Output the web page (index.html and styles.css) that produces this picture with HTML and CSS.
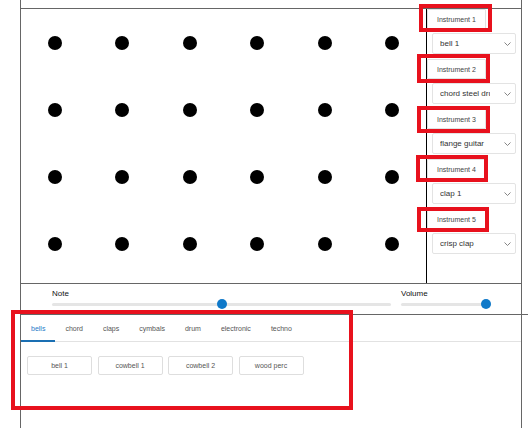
FILE: index.html
```html
<!DOCTYPE html>
<html>
<head>
<meta charset="utf-8">
<link rel="stylesheet" href="styles.css">
</head>
<body>
<div class="frame">
  <div class="top"></div>
  <div class="main">
    <div class="grid">
      <div class="cell"><span class="dot"></span></div><div class="cell"><span class="dot"></span></div><div class="cell"><span class="dot"></span></div><div class="cell"><span class="dot"></span></div><div class="cell"><span class="dot"></span></div><div class="cell"><span class="dot"></span></div>
      <div class="cell"><span class="dot"></span></div><div class="cell"><span class="dot"></span></div><div class="cell"><span class="dot"></span></div><div class="cell"><span class="dot"></span></div><div class="cell"><span class="dot"></span></div><div class="cell"><span class="dot"></span></div>
      <div class="cell"><span class="dot"></span></div><div class="cell"><span class="dot"></span></div><div class="cell"><span class="dot"></span></div><div class="cell"><span class="dot"></span></div><div class="cell"><span class="dot"></span></div><div class="cell"><span class="dot"></span></div>
      <div class="cell"><span class="dot"></span></div><div class="cell"><span class="dot"></span></div><div class="cell"><span class="dot"></span></div><div class="cell"><span class="dot"></span></div><div class="cell"><span class="dot"></span></div><div class="cell"><span class="dot"></span></div>
    </div>
    <div class="panel">
      <div class="inst">
        <button class="ibtn">Instrument 1</button>
        <div class="sel"><span class="sel-text">bell 1</span><svg class="chev" width="7" height="4" viewBox="0 0 7 4"><path d="M0.5 0.5 L3.5 3.5 L6.5 0.5" fill="none" stroke="#777" stroke-width="0.9"/></svg></div>
      </div>
      <div class="inst">
        <button class="ibtn">Instrument 2</button>
        <div class="sel"><span class="sel-text">chord steel drum</span><svg class="chev" width="7" height="4" viewBox="0 0 7 4"><path d="M0.5 0.5 L3.5 3.5 L6.5 0.5" fill="none" stroke="#777" stroke-width="0.9"/></svg></div>
      </div>
      <div class="inst">
        <button class="ibtn">Instrument 3</button>
        <div class="sel"><span class="sel-text">flange guitar</span><svg class="chev" width="7" height="4" viewBox="0 0 7 4"><path d="M0.5 0.5 L3.5 3.5 L6.5 0.5" fill="none" stroke="#777" stroke-width="0.9"/></svg></div>
      </div>
      <div class="inst">
        <button class="ibtn">Instrument 4</button>
        <div class="sel"><span class="sel-text">clap 1</span><svg class="chev" width="7" height="4" viewBox="0 0 7 4"><path d="M0.5 0.5 L3.5 3.5 L6.5 0.5" fill="none" stroke="#777" stroke-width="0.9"/></svg></div>
      </div>
      <div class="inst">
        <button class="ibtn">Instrument 5</button>
        <div class="sel"><span class="sel-text">crisp clap</span><svg class="chev" width="7" height="4" viewBox="0 0 7 4"><path d="M0.5 0.5 L3.5 3.5 L6.5 0.5" fill="none" stroke="#777" stroke-width="0.9"/></svg></div>
      </div>
    </div>
  </div>
  <div class="sliders">
    <div class="sl sl-note"><label class="sl-label">Note</label><input class="range range-note" type="range" min="0" max="100" value="50"></div>
    <div class="sl sl-vol"><label class="sl-label">Volume</label><input class="range range-vol" type="range" min="0" max="100" value="100"></div>
  </div>
  <div class="lib">
    <div class="tabs">
      <span class="tab active">bells</span>
      <span class="tab">chord</span>
      <span class="tab">claps</span>
      <span class="tab">cymbals</span>
      <span class="tab">drum</span>
      <span class="tab">electronic</span>
      <span class="tab">techno</span>
    </div>
    <div class="sounds">
      <button class="sbtn">bell 1</button>
      <button class="sbtn">cowbell 1</button>
      <button class="sbtn">cowbell 2</button>
      <button class="sbtn">wood perc</button>
    </div>
  </div>
</div>
<div class="mark m1"></div>
<div class="mark m2"></div>
<div class="mark m3"></div>
<div class="mark m4"></div>
<div class="mark m5"></div>
<div class="mark m6"></div>
</body>
</html>
```

FILE: styles.css
```css
* { box-sizing: border-box; }
html, body { margin: 0; padding: 0; background: #fff; }
body {
  width: 528px;
  height: 428px;
  overflow: hidden;
  position: relative;
  font-family: "Liberation Sans", Arial, sans-serif;
  color: #333;
}
.frame {
  margin-left: 20px;
  width: 502px;
  height: 428px;
  border-left: 1px solid #666;
  border-right: 1px solid #666;
}
.top {
  height: 9px;
  border-bottom: 1px solid #666;
}
.main {
  display: flex;
  height: 275px;
  border-bottom: 1px solid #666;
}
.grid {
  width: 405px;
  display: grid;
  grid-template-columns: repeat(6, 1fr);
  grid-template-rows: repeat(4, 67px);
  align-content: start;
}
.cell {
  display: flex;
  align-items: center;
  justify-content: center;
}
.dot {
  width: 14px;
  height: 14px;
  border-radius: 50%;
  background: #000;
}
.panel {
  width: 95px;
  border-left: 1px solid #000;
  display: flex;
  flex-direction: column;
}
.inst {
  display: flex;
  flex-direction: column;
  align-items: flex-start;
  height: 50px;
}
.ibtn {
  height: 20px;
  padding: 0 9px;
  border: 1px solid #e2e2e2;
  background: #fff;
  font-family: "Liberation Sans", Arial, sans-serif;
  font-size: 7px;
  color: #444;
  border-radius: 1px;
}
.sel {
  margin: 4px 0 0 5px;
  width: 84px;
  height: 21px;
  border: 1px solid #e3e3e3;
  border-radius: 2px;
  display: flex;
  align-items: center;
  padding-left: 7px;
  font-size: 8px;
  color: #333;
}
.sel-text {
  width: 50px;
  white-space: nowrap;
  overflow: hidden;
}
.chev {
  margin-left: 14px;
}
.sliders {
  height: 30px;
  display: flex;
  gap: 10px;
  padding: 5px 0 0 31px;
}
.sl {
  display: flex;
  flex-direction: column;
}
.sl-label {
  font-size: 8px;
  line-height: 10px;
  height: 10px;
  color: #111;
}
.range {
  -webkit-appearance: none;
  appearance: none;
  height: 10px;
  margin: 0;
  padding: 0;
  background: transparent;
}
.range-note { width: 339px; }
.range-vol { width: 90px; }
.range::-webkit-slider-runnable-track {
  height: 3px;
  background: #e5e5e5;
  border-radius: 2px;
}
.range::-webkit-slider-thumb {
  -webkit-appearance: none;
  appearance: none;
  width: 10px;
  height: 10px;
  border-radius: 50%;
  background: #0f79c9;
  border: none;
  margin-top: -3.5px;
}
.lib {
  border-top: 1px solid #666;
  margin-right: -7px;
}
.tabs {
  display: flex;
  height: 27px;
  width: 500px;
  border-bottom: 1px solid #e2e2e2;
}
.tab {
  height: 27px;
  margin-bottom: -1px;
  padding: 0 10px;
  display: flex;
  align-items: center;
  font-size: 7px;
  color: #555;
}
.tab.active {
  color: #1f7bc8;
  box-shadow: inset 0 -2px 0 #1a6fb3;
}
.sounds {
  display: flex;
  gap: 5.5px;
  padding: 14px 0 0 6px;
}
.sbtn {
  width: 65px;
  height: 19px;
  border: 1px solid #dedede;
  border-radius: 2px;
  background: #fff;
  font-family: "Liberation Sans", Arial, sans-serif;
  font-size: 7px;
  color: #555;
  padding: 0;
}
.mark {
  position: absolute;
  border: 4px solid #e8111d;
}
.m1 { left: 419px; top: 4px; width: 73px; height: 28px; }
.m2 { left: 417px; top: 54px; width: 73px; height: 29px; }
.m3 { left: 417px; top: 106px; width: 73px; height: 27px; }
.m4 { left: 416px; top: 155px; width: 72px; height: 27px; }
.m5 { left: 417px; top: 207px; width: 72px; height: 25px; }
.m6 { left: 11px; top: 310px; width: 342px; height: 100px; }
```
